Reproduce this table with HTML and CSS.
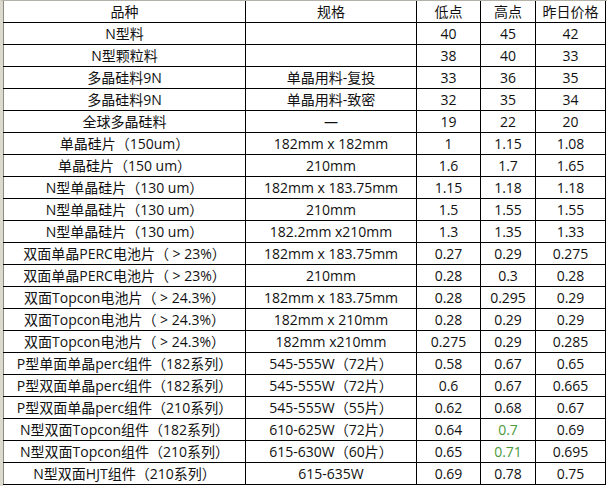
FILE: index.html
```html
<!DOCTYPE html>
<html lang="zh">
<head>
<meta charset="utf-8">
<link rel="stylesheet" href="styles.css">
</head>
<body>
<div class="sheet">
<table class="prices">
<colgroup>
<col class="c-name"><col class="c-spec"><col class="c-low"><col class="c-high"><col class="c-prev">
</colgroup>
<thead>
<tr><th>品种</th><th>规格</th><th>低点</th><th>高点</th><th>昨日价格</th></tr>
</thead>
<tbody>
<tr><td>N型料</td><td></td><td>40</td><td>45</td><td>42</td></tr>
<tr><td>N型颗粒料</td><td></td><td>38</td><td>40</td><td>33</td></tr>
<tr><td>多晶硅料9N</td><td>单晶用料-复投</td><td>33</td><td>36</td><td>35</td></tr>
<tr><td>多晶硅料9N</td><td>单晶用料-致密</td><td>32</td><td>35</td><td>34</td></tr>
<tr><td>全球多晶硅料</td><td>—</td><td>19</td><td>22</td><td>20</td></tr>
<tr><td>单晶硅片（150um）</td><td>182mm x 182mm</td><td>1</td><td>1.15</td><td>1.08</td></tr>
<tr><td>单晶硅片（150 um）</td><td>210mm</td><td>1.6</td><td>1.7</td><td>1.65</td></tr>
<tr><td>N型单晶硅片（130 um）</td><td>182mm x 183.75mm</td><td>1.15</td><td>1.18</td><td>1.18</td></tr>
<tr><td>N型单晶硅片（130 um）</td><td>210mm</td><td>1.5</td><td>1.55</td><td>1.55</td></tr>
<tr><td>N型单晶硅片（130 um）</td><td>182.2mm x210mm</td><td>1.3</td><td>1.35</td><td>1.33</td></tr>
<tr><td>双面单晶PERC电池片（ &gt; 23%）</td><td>182mm x 183.75mm</td><td>0.27</td><td>0.29</td><td>0.275</td></tr>
<tr><td>双面单晶PERC电池片（ &gt; 23%）</td><td>210mm</td><td>0.28</td><td>0.3</td><td>0.28</td></tr>
<tr><td>双面Topcon电池片（ &gt; 24.3%）</td><td>182mm x 183.75mm</td><td>0.28</td><td>0.295</td><td>0.29</td></tr>
<tr><td>双面Topcon电池片（ &gt; 24.3%）</td><td>182mm x 210mm</td><td>0.28</td><td>0.29</td><td>0.29</td></tr>
<tr><td>双面Topcon电池片（ &gt; 24.3%）</td><td>182mm x210mm</td><td>0.275</td><td>0.29</td><td>0.285</td></tr>
<tr><td>P型单面单晶perc组件（182系列）</td><td>545-555W（72片）</td><td>0.58</td><td>0.67</td><td>0.65</td></tr>
<tr><td>P型双面单晶perc组件（182系列）</td><td>545-555W（72片）</td><td>0.6</td><td>0.67</td><td>0.665</td></tr>
<tr><td>P型双面单晶perc组件（210系列）</td><td>545-555W（55片）</td><td>0.62</td><td>0.68</td><td>0.67</td></tr>
<tr><td>N型双面Topcon组件（182系列）</td><td>610-625W（72片）</td><td>0.64</td><td class="up">0.7</td><td>0.69</td></tr>
<tr><td>N型双面Topcon组件（210系列）</td><td>615-630W（60片）</td><td>0.65</td><td class="up">0.71</td><td>0.695</td></tr>
<tr><td>N型双面HJT组件（210系列）</td><td>615-635W</td><td>0.69</td><td>0.78</td><td>0.75</td></tr>
</tbody>
</table>
</div>
</body>
</html>
```

FILE: styles.css
```css
html, body {
  margin: 0;
  padding: 0;
  background: #ffffff;
}

.sheet {
  width: 607px;
  height: 486px;
  overflow: hidden;
  box-sizing: border-box;
  border-left: 3px solid #dcd9cf;
  border-top: 1px solid #b4b2a8;
}

.prices {
  border-collapse: collapse;
  table-layout: fixed;
  width: 602px;
  font-family: "Open Sans", "Noto Sans CJK SC", sans-serif;
  font-size: 14px;
  color: #111111;
}

.c-name { width: 242px; }
.c-spec { width: 171px; }
.c-low { width: 64px; }
.c-high { width: 55px; }
.c-prev { width: 70px; }

.prices th,
.prices td {
  border: 1px solid #000000;
  height: 21px;
  padding: 0;
  text-align: center;
  vertical-align: middle;
  font-weight: normal;
  line-height: 20px;
  white-space: nowrap;
  overflow: hidden;
}

.prices thead th {
  border-top: none;
}

.prices tr > :first-child {
  border-left: 1px solid #8c8a82;
}

.prices .up {
  color: #4a9a3c;
}
```
